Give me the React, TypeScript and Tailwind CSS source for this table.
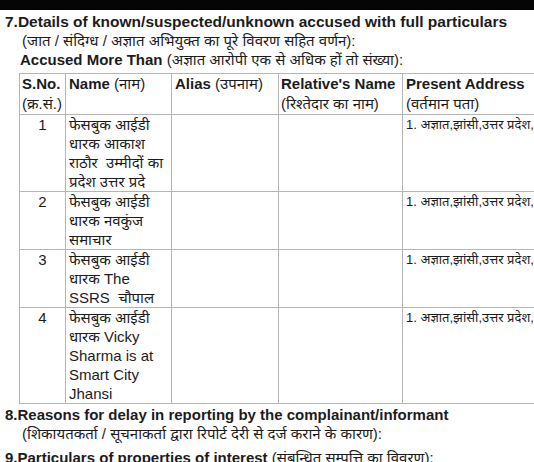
import React from "react";

const font = { fontFamily: '"Liberation Sans", "Noto Sans", Arial, sans-serif' };

function Lines({ lines }: { lines: string[] }) {
  return (
    <div>
      {lines.map((l, i) => (
        <div key={i} className="whitespace-pre">
          {l}
        </div>
      ))}
    </div>
  );
}

const rows = [
  { n: "1", name: ["फेसबुक आईडी", "धारक आकाश", "राठौर  उम्मीदों का", "प्रदेश उत्तर प्रदे"] },
  { n: "2", name: ["फेसबुक आईडी", "धारक नवकुंज", "समाचार"] },
  { n: "3", name: ["फेसबुक आईडी", "धारक The", "SSRS  चौपाल"] },
  { n: "4", name: ["फेसबुक आईडी", "धारक Vicky", "Sharma is at", "Smart City", "Jhansi"] },
];

export default function App() {
  return (
    <div className="w-[534px] h-[462px] overflow-hidden bg-white text-[#1c1c1c]" style={font}>
      <div className="h-[10px] bg-[#050505]" />
      <div className="pt-[2px] text-[15px] leading-[19px]">
        <div className="pl-[5px] font-bold whitespace-nowrap text-[15.5px]">
          7.Details of known/suspected/unknown accused with full particulars
        </div>
        <div className="pl-[22px] whitespace-nowrap">
          (जात / संदिग्ध / अज्ञात अभियुक्त का पूरे विवरण सहित वर्णन):
        </div>
        <div className="pl-[20px] whitespace-nowrap">
          <span className="font-bold">Accused More Than</span> (अज्ञात आरोपी एक से अधिक हों तो संख्या):
        </div>
      </div>
      <div className="pl-[19px] mt-[4px]">
        <table className="table-fixed border-collapse w-[620px] text-[15px]">
          <colgroup>
            <col className="w-[46px]" />
            <col className="w-[106px]" />
            <col className="w-[107px]" />
            <col className="w-[124px]" />
            <col className="w-[237px]" />
          </colgroup>
          <thead>
            <tr className="leading-[20px] align-top">
              <th className="border border-[#b5b5b5] px-[2px] text-left font-normal h-[41px]">
                <div className="font-bold whitespace-nowrap">S.No.</div>
                <div className="whitespace-nowrap">(क्र.सं.)</div>
              </th>
              <th className="border border-[#b5b5b5] px-[3px] text-left font-normal">
                <div className="whitespace-nowrap">
                  <span className="font-bold">Name</span> (नाम)
                </div>
              </th>
              <th className="border border-[#b5b5b5] px-[3px] text-left font-normal">
                <div className="whitespace-nowrap">
                  <span className="font-bold">Alias</span> (उपनाम)
                </div>
              </th>
              <th className="border border-[#b5b5b5] px-[2px] text-left font-normal">
                <div className="font-bold whitespace-nowrap">Relative's Name</div>
                <div className="whitespace-nowrap">(रिश्तेदार का नाम)</div>
              </th>
              <th className="border border-[#b5b5b5] px-[3px] text-left font-normal">
                <div className="font-bold whitespace-nowrap">Present Address</div>
                <div className="whitespace-nowrap">(वर्तमान पता)</div>
              </th>
            </tr>
          </thead>
          <tbody>
            {rows.map((r) => (
              <tr key={r.n} className="leading-[19px] align-top">
                <td className="border border-[#b5b5b5] text-center">{r.n}</td>
                <td className="border border-[#b5b5b5] px-[3px]">
                  <Lines lines={r.name} />
                </td>
                <td className="border border-[#b5b5b5]" />
                <td className="border border-[#b5b5b5]" />
                <td className="border border-[#b5b5b5] px-[3px] pt-[1px] text-[13px] leading-[17px]">
                  <div className="whitespace-nowrap">1. अज्ञात,झांसी,उत्तर प्रदेश,भारत</div>
                </td>
              </tr>
            ))}
          </tbody>
        </table>
      </div>
      <div className="mt-[1px] text-[15px] leading-[19px]">
        <div className="pl-[5px] font-bold whitespace-nowrap">
          8.Reasons for delay in reporting by the complainant/informant
        </div>
        <div className="pl-[22px] whitespace-nowrap">
          (शिकायतकर्ता / सूचनाकर्ता द्वारा रिपोर्ट देरी से दर्ज कराने के कारण):
        </div>
        <div className="pl-[5px] mt-[5px] whitespace-nowrap">
          <span className="font-bold">9.Particulars of properties of interest</span> (संबन्धित सम्पत्ति का विवरण):
        </div>
      </div>
    </div>
  );
}
